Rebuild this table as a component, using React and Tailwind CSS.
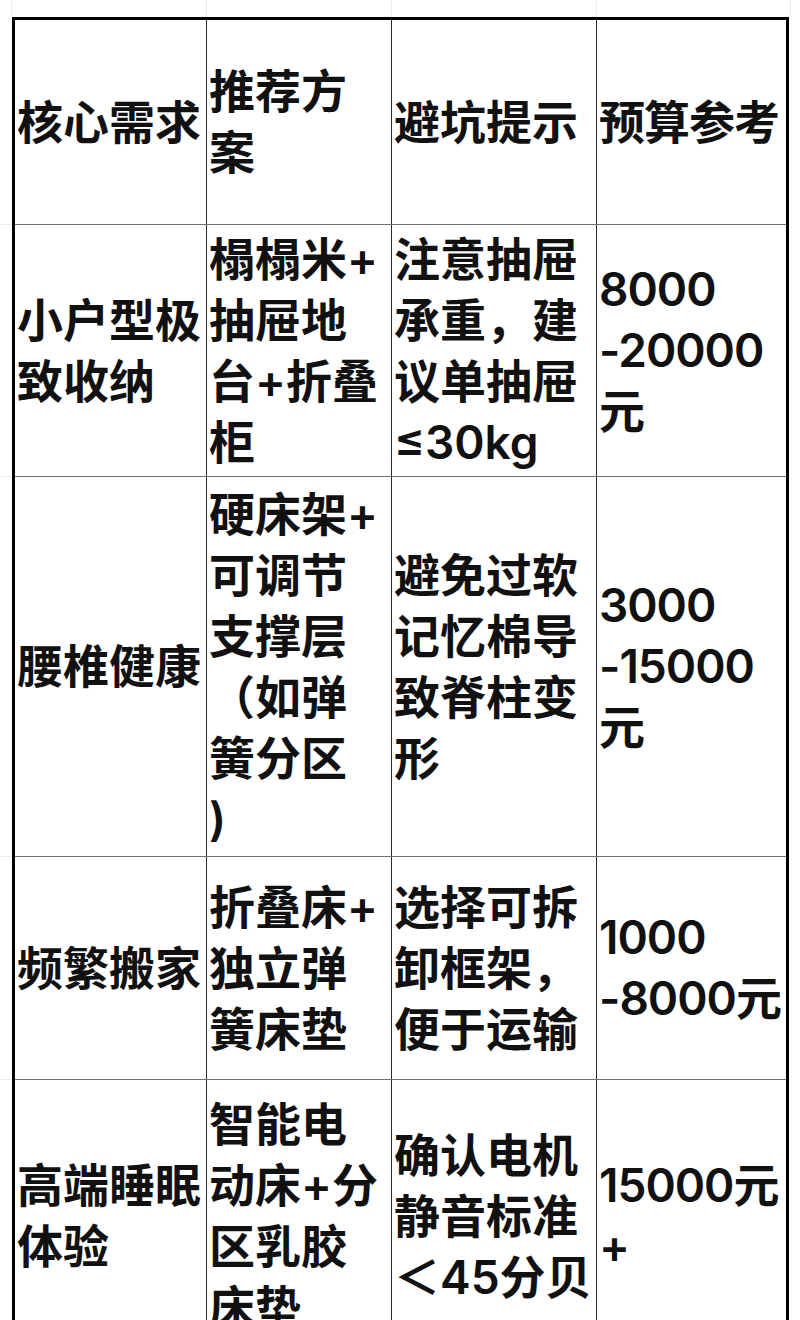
import React from 'react'

const header = [['核心需求'], ['推荐方', '案'], ['避坑提示'], ['预算参考']]

const rows = [
  {
    h: 'h-[252px]',
    cells: [
      ['小户型极', '致收纳'],
      ['榻榻米+', '抽屉地', '台+折叠', '柜'],
      ['注意抽屉', '承重，建', '议单抽屉', '≤30kg'],
      ['8000', '-20000', '元']
    ]
  },
  {
    h: 'h-[380px]',
    cells: [
      ['腰椎健康'],
      ['硬床架+', '可调节', '支撑层', '（如弹', '簧分区', ')'],
      ['避免过软', '记忆棉导', '致脊柱变', '形'],
      ['3000', '-15000', '元']
    ]
  },
  {
    h: 'h-[223px]',
    cells: [
      ['频繁搬家'],
      ['折叠床+', '独立弹', '簧床垫'],
      ['选择可拆', '卸框架，', '便于运输'],
      ['1000', '-8000元']
    ]
  },
  {
    h: 'h-[272px]',
    cells: [
      ['高端睡眠', '体验'],
      ['智能电', '动床+分', '区乳胶', '床垫'],
      ['确认电机', '静音标准', '＜45分贝'],
      ['15000元', '+']
    ]
  }
]

const colW = ['w-[192px]', 'w-[185px]', 'w-[205px]', 'w-[189px]']

function Cell({ lines, i }) {
  const last = i === colW.length - 1
  return (
    <div
      className={`${colW[i]} shrink-0 h-full flex items-center pl-[2px] ${
        last ? 'tracking-[-1px]' : 'border-r border-[#2a2a2a]'
      }`}
    >
      <div>
        {lines.map((l, k) => (
          <div key={k} className="whitespace-nowrap leading-[61px]">
            {l}
          </div>
        ))}
      </div>
    </div>
  )
}

function Row({ h, cells, lastRow }) {
  return (
    <div className={`${h} flex ${lastRow ? '' : 'border-b border-[#6f6f6f]'}`}>
      {cells.map((c, i) => (
        <Cell key={i} lines={c} i={i} />
      ))}
    </div>
  )
}

export default function App() {
  return (
    <div
      className="w-[800px] h-[1320px] overflow-hidden bg-white text-[#111] text-[46px] font-semibold"
      style={{ fontFamily: 'Inter, "Noto Sans CJK SC", sans-serif' }}
    >
      {/* faint sheet grid above the table */}
      <div className="h-[17px] flex">
        <div className="w-[12px] border-r border-[#ececec]" />
        <div className="w-[195px] border-r border-[#ececec]" />
        <div className="w-[185px] border-r border-[#ececec]" />
        <div className="w-[205px] border-r border-[#ececec]" />
        <div className="w-[194px] border-r border-[#ececec]" />
      </div>

      <div className="flex">
        <div className="w-[12px] shrink-0">
          <div className="h-[208px] border-b border-[#ececec]" />
          <div className="h-[252px] border-b border-[#ececec]" />
          <div className="h-[380px] border-b border-[#ececec]" />
          <div className="h-[223px] border-b border-[#ececec]" />
        </div>

        <div className="w-[777px] shrink-0 border-[3px] border-black">
          <Row h="h-[205px]" cells={header} />
          {rows.map((r, i) => (
            <Row key={i} h={r.h} cells={r.cells} lastRow={i === rows.length - 1} />
          ))}
        </div>
      </div>
    </div>
  )
}
